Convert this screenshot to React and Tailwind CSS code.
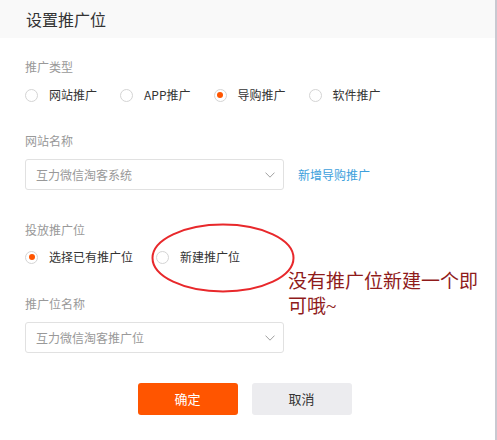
const Radio = ({ checked, label }) => (
  <label className="flex items-center gap-[11px] text-[12px] text-[#333]">
    <span className="w-[13px] h-[13px] rounded-full border border-[#d4d4d4] bg-white flex items-center justify-center">
      {checked && <span className="w-[6px] h-[6px] rounded-full bg-[#ff5500]" />}
    </span>
    {label}
  </label>
);

const Select = ({ value }) => (
  <div className="w-[259px] h-[31px] border border-[#e1e1e1] rounded-[3px] bg-white flex items-center justify-between pl-[10px] pr-[8px] text-[12px] text-[#999]">
    <span>{value}</span>
    <svg width="10" height="6" viewBox="0 0 10 6" fill="none">
      <polyline points="0.5,0.6 5,5.2 9.5,0.6" stroke="#a0a0a0" strokeWidth="1" />
    </svg>
  </div>
);

export default function App() {
  return (
    <div
      className="flex w-[497px] h-[440px] bg-white"
      style={{ fontFamily: '"Noto Sans CJK SC", "Noto Sans", sans-serif' }}
    >
      <div className="relative w-[495px] h-full">
        <header className="h-[38px] bg-[#f9f9f9] pl-[26px] flex items-center text-[16px] text-[#333]">
          设置推广位
        </header>

        <div className="px-[25px]">
          <div className="mt-[19px] leading-[20px] text-[12px] text-[#999]">推广类型</div>
          <div className="mt-[8px] h-[20px] flex items-center gap-[23px]">
            <Radio label="网站推广" />
            <Radio label="APP推广" />
            <Radio checked label="导购推广" />
            <Radio label="软件推广" />
          </div>

          <div className="mt-[26px] leading-[20px] text-[12px] text-[#999]">网站名称</div>
          <div className="mt-[8px] flex items-center gap-[14px]">
            <Select value="互力微信淘客系统" />
            <span className="text-[12px] text-[#3d9fdc]">新增导购推广</span>
          </div>

          <div className="mt-[30px] leading-[20px] text-[12px] text-[#999]">投放推广位</div>
          <div className="mt-[7px] h-[20px] flex items-center gap-[23px]">
            <Radio checked label="选择已有推广位" />
            <Radio label="新建推广位" />
          </div>

          <div className="mt-[27px] leading-[20px] text-[12px] text-[#999]">推广位名称</div>
          <div className="mt-[8px]">
            <Select value="互力微信淘客推广位" />
          </div>

          <div className="mt-[30px] flex justify-center gap-[14px] pr-[6px]">
            <button className="w-[100px] h-[32px] rounded-[3px] bg-[#ff5500] text-white text-[13px]">确定</button>
            <button className="w-[100px] h-[32px] rounded-[3px] bg-[#ececef] text-[#333] text-[13px]">取消</button>
          </div>
        </div>

        <svg className="absolute left-[150px] top-[222px]" width="146" height="72" viewBox="0 0 146 72">
          <ellipse cx="73" cy="36" rx="70.5" ry="33.5" fill="none" stroke="#e8282b" strokeWidth="2" />
        </svg>

        <div
          className="absolute left-[288px] top-[269px] w-[200px] text-[19px] leading-[25px] text-[#8f1b1b]"
          style={{ fontFamily: '"Liberation Serif", "Noto Sans CJK SC", serif' }}
        >
          没有推广位新建一个即可哦~
        </div>
      </div>
      <div className="w-[2px] h-full bg-[#c9c9d1]" />
    </div>
  );
}
